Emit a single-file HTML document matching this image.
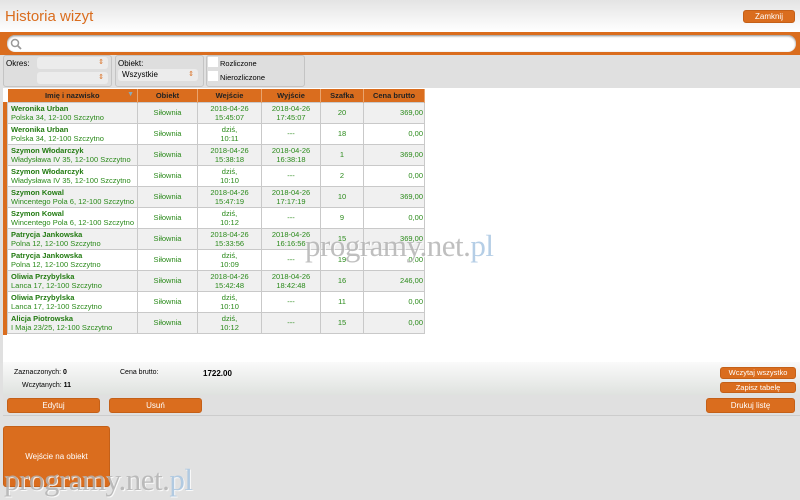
<!DOCTYPE html>
<html><head><meta charset="utf-8"><style>
*{margin:0;padding:0;box-sizing:border-box}
body{width:800px;height:500px;background:#e1e1e1;font-family:"Liberation Sans",sans-serif;position:relative;overflow:hidden}
.a{position:absolute}
.btn{position:absolute;background:#da6d1e;color:#fff;border-radius:3px;font-size:8px;text-align:center;line-height:15px;border:1px solid #c46018}
.hdr{left:0;top:0;width:800px;height:32px;background:linear-gradient(#e4e4e4,#fff)}
.box{position:absolute;top:55px;height:32px;border:1px solid #c4c4c4;border-radius:3px;background:#dedede}
.sel{position:absolute;background:#ececec;border-radius:3px;height:12px;font-size:8px;line-height:12px;padding-left:4px}
.sel:after{content:"⇕";position:absolute;right:4px;top:0;color:#da6d1e;font-size:7px}
table{border-collapse:collapse;position:absolute;left:7px;top:89px;width:418px;font-size:7.5px}
th{background:#da6d1e;height:13px;font-weight:bold;color:#222;border-right:1px solid #eea;border-right-color:#e9a46e;font-size:7.5px}
td{border:1px solid #c9c9c9;color:#2a8a1a;text-align:center;line-height:9px;padding:0}
tr.r td{height:21px}
tr.g td{background:#f0f0f0}
td.n{text-align:left;padding-left:3px}
td.n b{color:#217a10}
td.p{text-align:right;padding-right:1px}
.wm{position:absolute;font-family:"Liberation Serif",serif;font-size:31px;color:#b4b4b4;opacity:.85;text-shadow:1px 1px 0 #fff;letter-spacing:-0.5px}
.wm span{color:#a9c6e2}
</style></head><body>
<div class="a hdr"></div>
<div class="a" style="left:5px;top:8px;font-size:15px;color:#da6d1e">Historia wizyt</div>
<div class="btn" style="left:743px;top:10px;width:52px;height:13px;line-height:11px">Zamknij</div>
<div class="a" style="left:0;top:32px;width:800px;height:23px;background:#da6d1e"></div>
<div class="a" style="left:7px;top:35px;width:789px;height:17px;background:#fff;border-radius:8px;box-shadow:inset 0 1px 2px #888"></div>
<svg class="a" style="left:10px;top:38px" width="12" height="12"><circle cx="5" cy="5" r="3.5" fill="none" stroke="#999" stroke-width="1.5"/><path d="M7.5 7.5 L11 11" stroke="#999" stroke-width="1.8"/></svg>
<div class="a" style="left:0;top:55px;width:800px;height:34px;background:#e0e0e0"></div>
<div class="box" style="left:3px;width:109px"></div>
<div class="a" style="left:6px;top:59px;font-size:8px">Okres:</div>
<div class="sel" style="left:37px;top:57px;width:71px"></div>
<div class="sel" style="left:37px;top:72px;width:71px"></div>
<div class="box" style="left:115px;width:89px"></div>
<div class="a" style="left:118px;top:59px;font-size:8px">Obiekt:</div>
<div class="sel" style="left:118px;top:69px;width:80px">Wszystkie</div>
<div class="box" style="left:206px;width:99px"></div>
<div class="a" style="left:208px;top:57px;width:10px;height:10px;background:#fff"></div>
<div class="a" style="left:220px;top:59px;font-size:7.5px">Rozliczone</div>
<div class="a" style="left:208px;top:71px;width:10px;height:10px;background:#fff"></div>
<div class="a" style="left:220px;top:73px;font-size:7.5px">Nierozliczone</div>
<div class="a" style="left:0;top:88px;width:800px;height:275px;background:#fff;border-left:3px solid #e0e0e0"></div>
<div class="a" style="left:3px;top:102px;width:4px;height:233px;background:#da6d1e"></div>
<table>
<tr><th style="width:130px;position:relative">Imię i nazwisko<span style="position:absolute;right:3px;top:2px;color:#8ab;font-size:7px">▼</span></th><th style="width:60px">Obiekt</th><th style="width:64px">Wejście</th><th style="width:59px">Wyjście</th><th style="width:43px">Szafka</th><th>Cena brutto</th></tr>
<tr class="r g"><td class="n"><b>Weronika Urban</b><br>Polska 34, 12-100 Szczytno</td><td>Siłownia</td><td>2018-04-26<br>15:45:07</td><td>2018-04-26<br>17:45:07</td><td>20</td><td class="p">369,00</td></tr>
<tr class="r"><td class="n"><b>Weronika Urban</b><br>Polska 34, 12-100 Szczytno</td><td>Siłownia</td><td>dziś,<br>10:11</td><td>---</td><td>18</td><td class="p">0,00</td></tr>
<tr class="r g"><td class="n"><b>Szymon Włodarczyk</b><br>Władysława IV 35, 12-100 Szczytno</td><td>Siłownia</td><td>2018-04-26<br>15:38:18</td><td>2018-04-26<br>16:38:18</td><td>1</td><td class="p">369,00</td></tr>
<tr class="r"><td class="n"><b>Szymon Włodarczyk</b><br>Władysława IV 35, 12-100 Szczytno</td><td>Siłownia</td><td>dziś,<br>10:10</td><td>---</td><td>2</td><td class="p">0,00</td></tr>
<tr class="r g"><td class="n"><b>Szymon Kowal</b><br>Wincentego Pola 6, 12-100 Szczytno</td><td>Siłownia</td><td>2018-04-26<br>15:47:19</td><td>2018-04-26<br>17:17:19</td><td>10</td><td class="p">369,00</td></tr>
<tr class="r"><td class="n"><b>Szymon Kowal</b><br>Wincentego Pola 6, 12-100 Szczytno</td><td>Siłownia</td><td>dziś,<br>10:12</td><td>---</td><td>9</td><td class="p">0,00</td></tr>
<tr class="r g"><td class="n"><b>Patrycja Jankowska</b><br>Polna 12, 12-100 Szczytno</td><td>Siłownia</td><td>2018-04-26<br>15:33:56</td><td>2018-04-26<br>16:16:56</td><td>15</td><td class="p">369,00</td></tr>
<tr class="r"><td class="n"><b>Patrycja Jankowska</b><br>Polna 12, 12-100 Szczytno</td><td>Siłownia</td><td>dziś,<br>10:09</td><td>---</td><td>19</td><td class="p">0,00</td></tr>
<tr class="r g"><td class="n"><b>Oliwia Przybylska</b><br>Lanca 17, 12-100 Szczytno</td><td>Siłownia</td><td>2018-04-26<br>15:42:48</td><td>2018-04-26<br>18:42:48</td><td>16</td><td class="p">246,00</td></tr>
<tr class="r"><td class="n"><b>Oliwia Przybylska</b><br>Lanca 17, 12-100 Szczytno</td><td>Siłownia</td><td>dziś,<br>10:10</td><td>---</td><td>11</td><td class="p">0,00</td></tr>
<tr class="r g"><td class="n"><b>Alicja Piotrowska</b><br>I Maja 23/25, 12-100 Szczytno</td><td>Siłownia</td><td>dziś,<br>10:12</td><td>---</td><td>15</td><td class="p">0,00</td></tr>
</table>
<div class="a" style="left:3px;top:362px;width:797px;height:33px;background:linear-gradient(#fafafa,#dfe2df)"></div>
<div class="a" style="left:14px;top:369px;font-size:7px">Zaznaczonych: <b>0</b></div>
<div class="a" style="left:22px;top:382px;font-size:7px">Wczytanych: <b>11</b></div>
<div class="a" style="left:120px;top:369px;font-size:7px">Cena brutto:</div>
<div class="a" style="left:203px;top:369px;font-size:8px;font-weight:bold">1722.00</div>
<div class="btn" style="left:720px;top:367px;width:76px;height:12px;line-height:10px;font-size:7.5px">Wczytaj wszystko</div>
<div class="btn" style="left:720px;top:382px;width:76px;height:11px;line-height:9px;font-size:7.5px">Zapisz tabelę</div>
<div class="a" style="left:3px;top:395px;width:797px;height:21px;background:#e0e0e0;border-bottom:1px solid #ccc"></div>
<div class="btn" style="left:7px;top:398px;width:93px;height:15px;line-height:13px">Edytuj</div>
<div class="btn" style="left:109px;top:398px;width:93px;height:15px;line-height:13px">Usuń</div>
<div class="btn" style="left:706px;top:398px;width:89px;height:15px;line-height:13px">Drukuj listę</div>
<div class="btn" style="left:3px;top:426px;width:107px;height:61px;line-height:59px;font-size:8px">Wejście na obiekt</div>
<div class="wm" style="left:305px;top:228px">programy.net.<span>pl</span></div>
<div class="wm" style="left:4px;top:462px">programy.net.<span>pl</span></div>
</body></html>
